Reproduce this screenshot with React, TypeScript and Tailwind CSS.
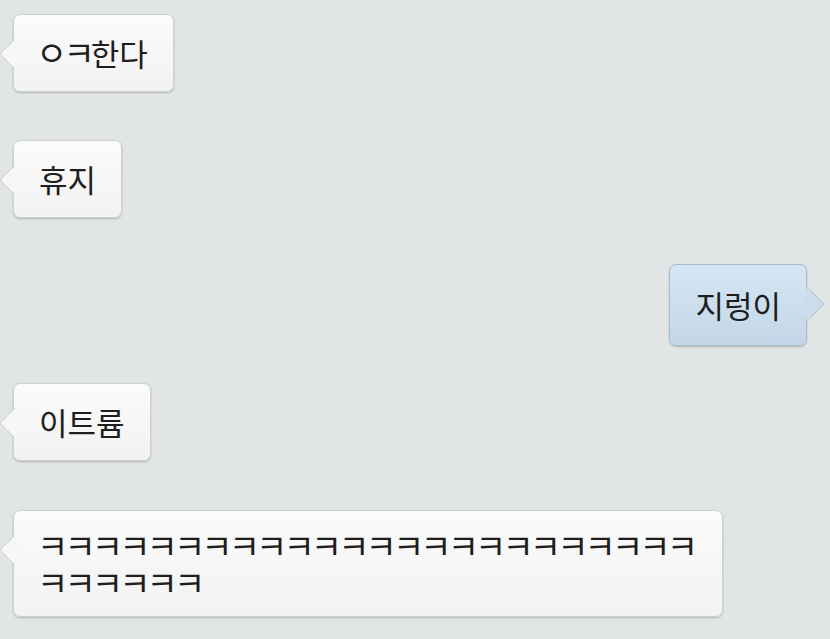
import React from "react";

type Side = "left" | "right";

function Tail({ side }: { side: Side }) {
  const isLeft = side === "left";
  return (
    <svg
      width="18"
      height="30"
      viewBox="0 0 18 30"
      className={
        isLeft
          ? "absolute top-[24px] left-[-14px]"
          : "absolute top-[24px] right-[-18px] -scale-x-100"
      }
    >
      <path
        d="M15 0 L1.5 13.5 Q0 15 1.5 16.5 L15 30 L18 30 L18 0 Z"
        fill={isLeft ? "#f7f7f7" : "#cbdded"}
      />
      <path
        d="M14.5 0.5 L1.5 13.5 Q0 15 1.5 16.5 L14.5 29.5"
        fill="none"
        stroke={isLeft ? "#c9cdcd" : "#a7bac9"}
        strokeWidth="1"
      />
    </svg>
  );
}

function Bubble({
  side = "left",
  className = "",
  children,
}: {
  side?: Side;
  className?: string;
  children: React.ReactNode;
}) {
  const skin =
    side === "left"
      ? "bg-gradient-to-b from-[#fbfbfb] to-[#f1f2f1] border-[#cdd1d1]"
      : "bg-gradient-to-b from-[#d6e6f3] to-[#c3d7e8] border-[#a9bccb]";
  return (
    <div
      className={`relative rounded-[7px] border ${skin} shadow-[0_1px_2px_rgba(0,0,0,0.22)] px-[25px] text-[31px] leading-[36px] text-[#1e1e1e] ${className}`}
    >
      <Tail side={side} />
      {children}
    </div>
  );
}

// standalone jamo (ㅇ, ㅋ) render small in Noto, so bump them up
function Jamo({ children }: { children: React.ReactNode }) {
  return (
    <span className="text-[34px] leading-[0] tracking-[-3.9px]">{children}</span>
  );
}

export default function App() {
  return (
    <div
      className="w-[830px] h-[639px] overflow-hidden bg-[#e1e5e6] px-[13px] pt-[14px] flex flex-col"
      style={{ fontFamily: '"Noto Sans CJK KR", "Noto Sans", sans-serif' }}
    >
      <div className="flex">
        <Bubble className="py-[20px] pl-[22px]">
          <Jamo>ㅇㅋ</Jamo>한다
        </Bubble>
      </div>

      <div className="flex mt-[48px]">
        <Bubble className="py-[20px]">휴지</Bubble>
      </div>

      <div className="flex justify-end mt-[46px] pr-[10px]">
        <Bubble side="right" className="py-[22px]">지렁이</Bubble>
      </div>

      <div className="flex mt-[37px]">
        <Bubble className="py-[20px]">이트륨</Bubble>
      </div>

      <div className="flex mt-[49px]">
        <Bubble className="w-[710px] pt-[16px] pb-[15px] pl-[23px] leading-[37px] break-all">
          <Jamo>ㅋㅋㅋㅋㅋㅋㅋㅋㅋㅋㅋㅋㅋㅋㅋㅋㅋㅋㅋㅋㅋㅋㅋㅋㅋㅋㅋㅋㅋㅋ</Jamo>
        </Bubble>
      </div>
    </div>
  );
}
